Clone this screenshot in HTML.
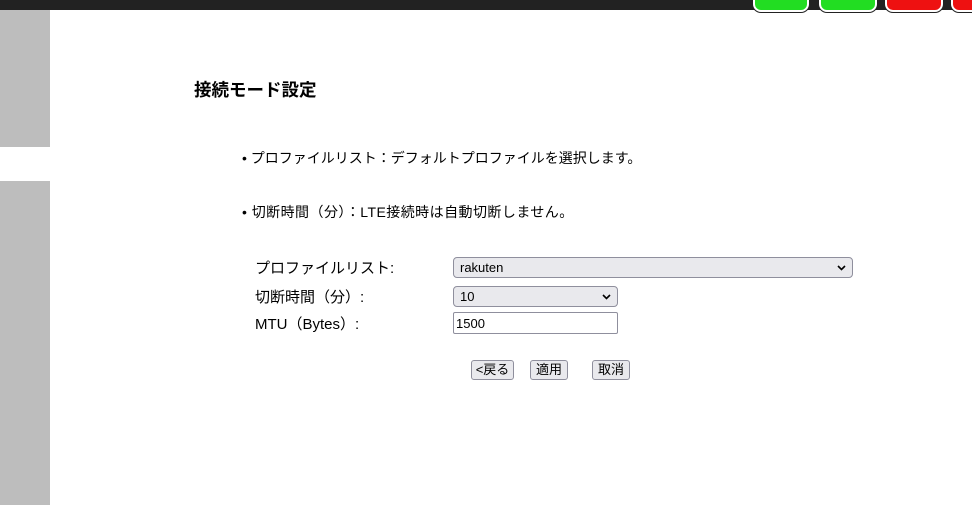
<!DOCTYPE html>
<html><head><meta charset="utf-8"><style>
body{margin:0;width:972px;height:505px;overflow:hidden;background:#fff;position:relative;font-family:"Liberation Sans","Noto Sans CJK JP",sans-serif;color:#000}
.a{position:absolute}
.pill{position:absolute;top:-12px;height:20px;border:2px solid #fff;border-radius:8px;box-shadow:0 0 0 1px #222}
.t{font-size:14px;white-space:nowrap}
.l{font-size:15px}
.sel{position:absolute;box-sizing:border-box;background:#e9e9ed;border:1px solid #8f8f9d;border-radius:4px;font-size:13px;padding:2px 0 0 6px;height:21px}
.sel svg{position:absolute;right:6px;top:7px}
.btn{position:absolute;box-sizing:border-box;background:#e9e9ed;border:1px solid #8f8f9d;border-radius:3px;font-size:13px;height:20px;text-align:center;line-height:18px}
</style></head><body>
<div class="a" style="left:0;top:0;width:972px;height:10px;background:#222"></div>
<div class="pill" style="left:753px;width:52px;background:#22dd22"></div>
<div class="pill" style="left:819px;width:54px;background:#22dd22"></div>
<div class="pill" style="left:885px;width:54px;background:#ee1111"></div>
<div class="pill" style="left:951px;width:40px;background:#ee1111"></div>
<div class="a" style="left:0;top:10px;width:50px;height:137px;background:#bdbdbd"></div>
<div class="a" style="left:0;top:181px;width:50px;height:324px;background:#bdbdbd"></div>
<div class="a t" style="left:194px;top:77px;font-size:17.5px;font-weight:bold">接続モード設定</div>
<div class="a t" style="left:242px;top:148px">• プロファイルリスト：デフォルトプロファイルを選択します。</div>
<div class="a t" style="left:242px;top:202px;letter-spacing:0.45px">• 切断時間（分）：LTE接続時は自動切断しません。</div>
<div class="a t l" style="left:255px;top:257px">プロファイルリスト:</div>
<div class="a t l" style="left:255px;top:286px">切断時間（分）:</div>
<div class="a t l" style="left:255px;top:313px">MTU（Bytes）:</div>
<div class="sel" style="left:453px;top:257px;width:400px">rakuten<svg width="9" height="6"><path d="M1 1L4.5 4.5L8 1" stroke="#000" stroke-width="1.6" fill="none"/></svg></div>
<div class="sel" style="left:453px;top:286px;width:165px">10<svg width="9" height="6"><path d="M1 1L4.5 4.5L8 1" stroke="#000" stroke-width="1.6" fill="none"/></svg></div>
<div class="a" style="left:453px;top:312px;width:165px;height:22px;box-sizing:border-box;border:1px solid #8f8f9d;border-radius:2px;font-size:13px;padding:3px 0 0 2px">1500</div>
<div class="btn" style="left:471px;top:360px;width:43px">&lt;戻る</div>
<div class="btn" style="left:530px;top:360px;width:38px">適用</div>
<div class="btn" style="left:592px;top:360px;width:38px">取消</div>
</body></html>
